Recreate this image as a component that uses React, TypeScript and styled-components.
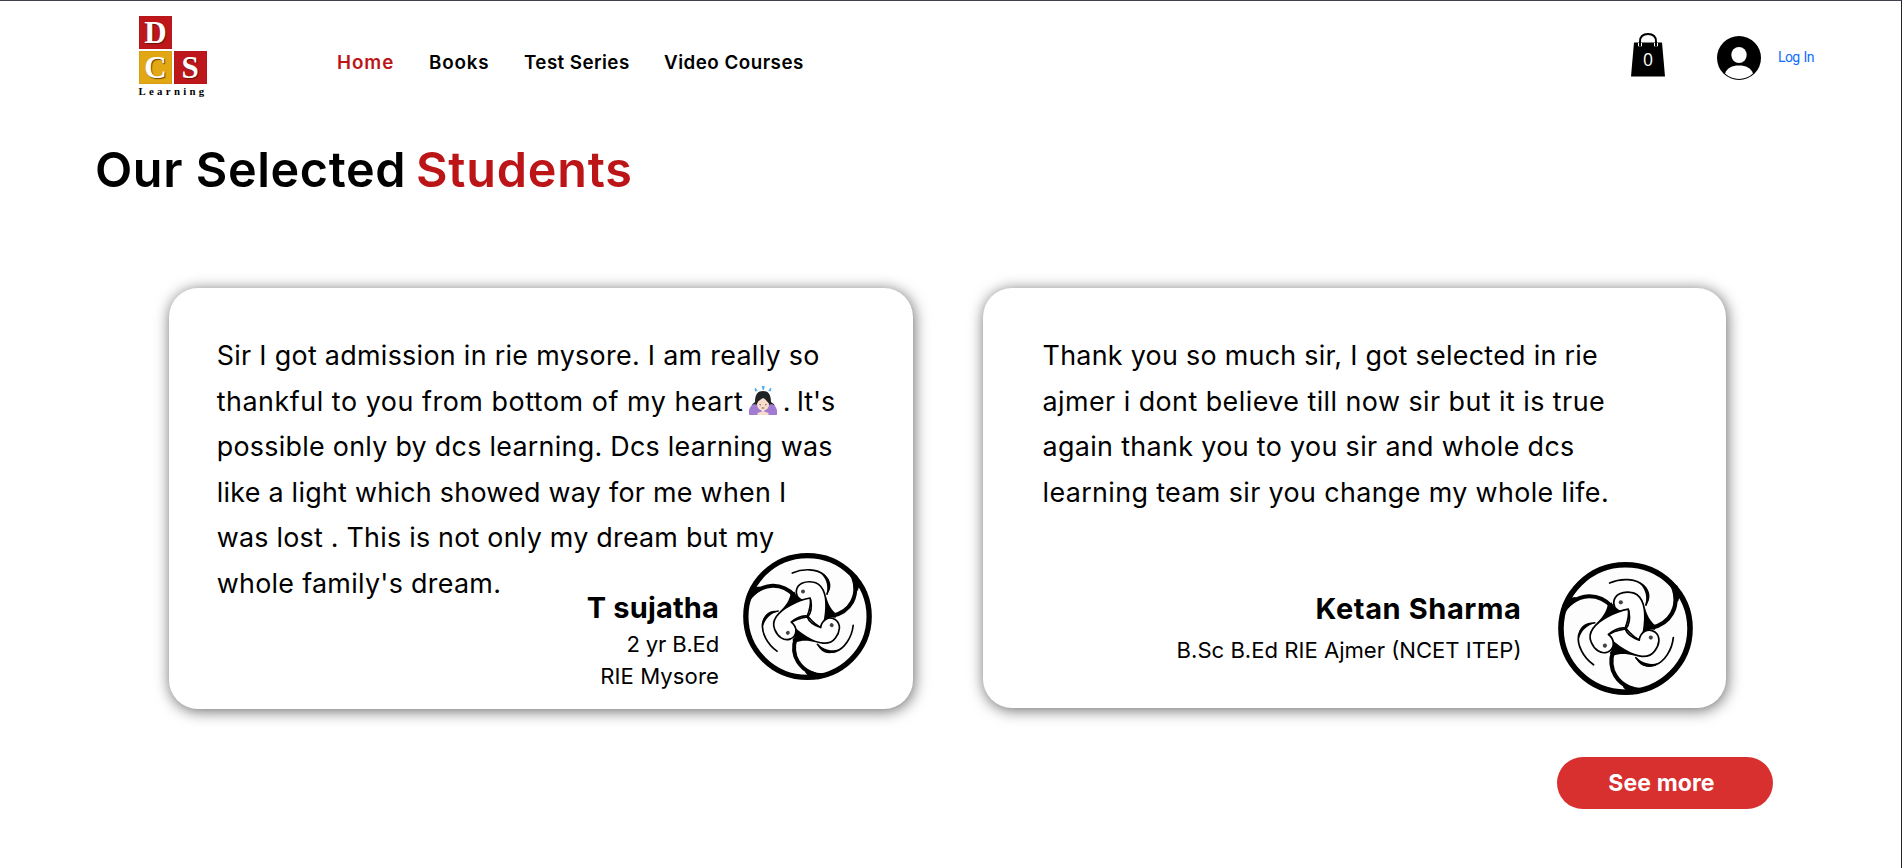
import React from "react";
import styled, { createGlobalStyle } from "styled-components";

const RED = "#bb1518";

const GlobalStyle = createGlobalStyle`
  * { box-sizing: border-box; }
  body { margin: 0; background: #fff; color: #000; font-family: Inter, "Open Sans", sans-serif; }
  a { color: inherit; text-decoration: none; }
`;

const Page = styled.div`
  width: 1902px;
  height: 868px;
  overflow: hidden;
  display: flex;
  flex-direction: column;
  border-top: 1px solid #45404e;
  border-right: 1px solid #26242a;
`;

const Header = styled.header`
  height: 110px;
  padding: 0 88px 0 138px;
  display: flex;
  align-items: flex-start;
`;

const Logo = styled.div`
  width: 70px;
  margin: 15px 129px 0 0;
  font-family: "Liberation Serif", serif;
`;

const Tiles = styled.div`
  display: grid;
  grid-template-columns: 33px 33px;
  grid-auto-rows: 33px;
  gap: 2px 1.6px;
  padding-left: 1px;
`;

const Tile = styled.span<{ $tone?: "gold" }>`
  grid-column: ${(p) => (p.$tone ? 1 : "auto")};
  background: ${(p) => (p.$tone ? "#e2a814" : "#bd171b")};
  box-shadow: inset 0 0 1px rgba(60, 0, 0, 0.5);
  color: #fff;
  font-size: 31px;
  font-weight: 700;
  line-height: 33px;
  text-align: center;
  text-shadow: 1px 1px 1px rgba(60, 20, 0, 0.7);
`;

const LogoCaption = styled.div`
  margin: 1px 0 0 0.5px;
  font-size: 10.8px;
  line-height: 12px;
  font-weight: 700;
  letter-spacing: 3.3px;
  white-space: nowrap;
`;

const Nav = styled.nav`
  display: flex;
  margin-top: 50px;
  line-height: 24px;
`;

const NavLink = styled.a<{ $active?: boolean; $width: number; $track: number }>`
  width: ${(p) => p.$width}px;
  color: ${(p) => (p.$active ? RED : "#000")};
  font-size: 18.8px;
  font-weight: 600;
  letter-spacing: ${(p) => p.$track}px;
  white-space: nowrap;
`;

const Account = styled.div`
  margin-left: auto;
  padding-top: 31px;
  display: flex;
  align-items: flex-start;
`;

const Bag = styled.svg`
  width: 36px;
  height: 46px;
  margin-right: 51px;
`;

const Avatar = styled.svg`
  width: 44px;
  height: 44px;
  margin: 4px 17px 0 0;
`;

const LogIn = styled.a`
  width: 35px;
  margin-top: 15px;
  color: #116dff;
  font-family: Roboto, sans-serif;
  font-size: 14px;
  line-height: 20px;
  letter-spacing: -0.6px;
  word-spacing: 1px;
  white-space: nowrap;
`;

const Heading = styled.h1`
  margin: 29px 0 0 95px;
  font-size: 48.5px;
  line-height: 60px;
  font-weight: 600;
  letter-spacing: 0.6px;
  white-space: nowrap;
`;

const HeadingAccent = styled.span`
  margin-left: -3px;
  color: ${RED};
  letter-spacing: 0.8px;
`;

const Cards = styled.main`
  display: flex;
  align-items: flex-start;
  gap: 70px;
  margin: 88px 0 0 169px;
`;

const Card = styled.article<{ $width: number; $height: number; $inset: number }>`
  width: ${(p) => p.$width}px;
  height: ${(p) => p.$height}px;
  padding: 45px 0 0 ${(p) => p.$inset}px;
  display: grid;
  border-radius: 29px;
  background: #fff;
  box-shadow: 1px 2px 15px rgba(0, 0, 0, 0.6);
`;

const Quote = styled.blockquote`
  grid-area: 1 / 1;
  margin: 0;
  font-size: 26.88px;
  line-height: 45.6px;
`;

const Line = styled.div<{ $track: number }>`
  height: 45.6px;
  letter-spacing: ${(p) => p.$track}px;
  white-space: nowrap;
`;

const LineEnd = styled.span`
  letter-spacing: 0;
  word-spacing: -1.5px;
`;

const Bow = styled.svg`
  width: 28px;
  height: 29px;
  margin: 0 5.5px 0 6px;
  vertical-align: -4px;
`;

const Signature = styled.footer<{ $gap: number; $right: number }>`
  grid-area: 1 / 1;
  place-self: end;
  display: flex;
  align-items: flex-end;
  gap: ${(p) => p.$gap}px;
  padding-right: ${(p) => p.$right}px;
`;

const Person = styled.div<{ $bottom: number }>`
  padding-bottom: ${(p) => p.$bottom}px;
  text-align: right;
`;

const Name = styled.div<{ $track: number; $space: number }>`
  margin-bottom: ${(p) => p.$space}px;
  font-size: 29px;
  font-weight: 700;
  line-height: 36px;
  letter-spacing: ${(p) => p.$track}px;
`;

const Detail = styled.div<{ $track: number }>`
  font-size: 22.1px;
  line-height: 32px;
  letter-spacing: ${(p) => p.$track}px;
`;

const EmblemSvg = styled.svg<{ $w: number; $h: number; $bottom: number }>`
  width: ${(p) => p.$w}px;
  height: ${(p) => p.$h}px;
  margin-bottom: ${(p) => p.$bottom}px;
`;

const Actions = styled.div`
  display: flex;
  justify-content: flex-end;
  padding-right: 128px;
  margin-top: 48px;
`;

const MoreButton = styled.button`
  width: 216px;
  height: 52px;
  padding: 0 7px 0 0;
  border: 0;
  border-radius: 26px;
  background: #d82f2f;
  color: #fff;
  font: 700 23px/53px Inter, sans-serif;
  letter-spacing: 0.1px;
`;

function Arm({ turn }: { turn: number }) {
  return (
    <g transform={`rotate(${turn} 217.5 214)`} fill="none" stroke="#000">
      <path d="M343 76C362 100 368 138 351 170C340 190 324 205 292 212" strokeWidth="12" />
      <path d="M334 68L366 90L384 130C378 116 374 116 369 134L358 140L352 100Z" fill="#000" stroke="none" />
      <path d="M272 150C280 178 288 192 304 206L302 218C288 213 280 220 268 236Z" fill="#000" stroke="none" />
      <path d="M172 82C205 67 246 69 268 88C284 104 286 122 276 146" strokeWidth="5" strokeLinecap="round" />
      <path d="M250 77C268 83 284 97 286 116C287 128 284 138 275 146C279 130 277 110 268 96C263 88 258 82 250 77Z" fill="#000" stroke="none" />
    </g>
  );
}

function Bird({ turn }: { turn: number }) {
  return (
    <g transform={`rotate(${turn} 217.5 214)`}>
      <path
        d="M227 163C206 172 182 160 184 136C187 114 210 106 232 109C262 112 274 145 273 185C272 215 270 228 262 249C245 243 232 230 219 214C231 200 230 180 227 163Z"
        fill="#fff"
        stroke="#000"
        strokeWidth="5"
        strokeLinejoin="round"
      />
      <circle cx="204" cy="138" r="6" fill="#444" />
    </g>
  );
}

function Emblem(props: { w: number; h: number; bottom: number }) {
  return (
    <EmblemSvg $w={props.w} $h={props.h} $bottom={props.bottom} viewBox="24 21 387 386" preserveAspectRatio="none">
      <circle cx="217.5" cy="214" r="185" fill="#fdfdfd" stroke="#000" strokeWidth="16" />
      {[0, 120, 240].map((t) => <Arm key={t} turn={t} />)}
      {[0, 120, 240].map((t) => <Bird key={t} turn={t} />)}
    </EmblemSvg>
  );
}

function BowingPerson() {
  return (
    <Bow viewBox="0 0 28 29" role="img" aria-label="Person bowing">
      <path d="M6.2 2l2 2.600-1.800.5zM13 .4h2.300l-1 3.600zM21.800 2l-.2 3-1.800-.4z" fill="#4aa7ee" stroke="#4aa7ee" strokeWidth=".8" />
      <path d="M6 16C6 8 9 5 14 5s8 3 8 11c2 1.500 4 2.500 3.500 4.500L20 20H8l-5 .5C2.500 18.500 4 17.500 6 16z" fill="#202326" />
      <path d="M2 20c2-2.500 5-2.500 7.500 0l4.500 6 4.500-6c2.500-2.500 5.500-2.500 7.500 0 2 3 2.500 5 1.800 9H.2C-.5 25 0 23 2 20z" fill="#a17bd2" />
      <path d="M8 18c0-3 2-5 6-6 4 1 6 3 6 6 0 4-2.500 6.500-6 6.500S8 22 8 18z" fill="#f8dccb" />
      <path d="M8 17.500c1-3 4-4 6.500-6l5.500 6V11L14 7 8 11z" fill="#202326" />
      <path d="M8.500 29v-2L14 25l5.500 2v2z" fill="#f8dccb" />
      <path d="M10.500 18.500l1.500.5M17.500 18.500L16 19M12.800 22h2.400" stroke="#70493f" strokeWidth=".9" fill="none" />
    </Bow>
  );
}

export default function App() {
  return (
    <>
      <GlobalStyle />
      <Page>
        <Header>
          <Logo>
            <Tiles>
              <Tile>D</Tile>
              <Tile $tone="gold">C</Tile>
              <Tile>S</Tile>
            </Tiles>
            <LogoCaption>Learning</LogoCaption>
          </Logo>
          <Nav>
            <NavLink href="#" $active $width={92} $track={0.95}>Home</NavLink>
            <NavLink href="#" $width={95} $track={0.85}>Books</NavLink>
            <NavLink href="#" $width={140} $track={0.42}>Test Series</NavLink>
            <NavLink href="#" $width={142} $track={0.48}>Video Courses</NavLink>
          </Nav>
          <Account>
            <Bag viewBox="0 0 36 46">
              <path d="M4 10.500h28l3 34H1z" />
              <path d="M10 14.500V9.500C10 4.500 13 2 18 2s8 2.500 8 7.500v5" fill="none" stroke="#fff" strokeWidth="4" clipPath="inset(11px 0 0 0)" />
              <path d="M10 14V9.500C10 4.500 13 2 18 2s8 2.500 8 7.500V14" fill="none" stroke="#000" strokeWidth="2" />
              <text x="18" y="33.500" textAnchor="middle" fill="#fff" fontFamily="Open Sans, sans-serif" fontSize="17.500">0</text>
            </Bag>
            <Avatar viewBox="0 0 44 44">
              <circle cx="22" cy="22" r="22" />
              <ellipse cx="22" cy="19" rx="7.700" ry="8" fill="#fff" />
              <path d="M8 37.500C10 32 15 29.500 22 29.500S34 32 36 37.500A20.500 20.500 0 0 1 8 37.500z" fill="#fff" />
            </Avatar>
            <LogIn href="#">Log In</LogIn>
          </Account>
        </Header>
        <Heading>
          Our Selected <HeadingAccent>Students</HeadingAccent>
        </Heading>
        <Cards>
          <Card $width={744} $height={421} $inset={47.7}>
            <Quote>
              <Line $track={0.3}>Sir I got admission in rie mysore. I am really so</Line>
              <Line $track={0.54}>
                thankful to you from bottom of my heart<BowingPerson /><LineEnd>. It's</LineEnd>
              </Line>
              <Line $track={0.27}>possible only by dcs learning. Dcs learning was</Line>
              <Line $track={0.27}>like a light which showed way for me when I</Line>
              <Line $track={0.23}>was lost . This is not only my dream but my</Line>
              <Line $track={0.29}>whole family's dream.</Line>
            </Quote>
            <Signature $gap={24} $right={41}>
              <Person $bottom={17.5}>
                <Name $track={0.15} $space={1.2}>T sujatha</Name>
                <Detail $track={-0.2}>2 yr B.Ed</Detail>
                <Detail $track={0.1}>RIE Mysore</Detail>
              </Person>
              <Emblem w={129} h={127} bottom={29} />
            </Signature>
          </Card>
          <Card $width={743} $height={420} $inset={59.5}>
            <Quote>
              <Line $track={0.28}>Thank you so much sir, I got selected in rie</Line>
              <Line $track={0.45}>ajmer i dont believe till now sir but it is true</Line>
              <Line $track={0.35}>again thank you to you sir and whole dcs</Line>
              <Line $track={0.37}>learning team sir you change my whole life.</Line>
            </Quote>
            <Signature $gap={36.5} $right={33}>
              <Person $bottom={42}>
                <Name $track={0.6} $space={7.4}>Ketan Sharma</Name>
                <Detail $track={0}>B.Sc B.Ed RIE Ajmer (NCET ITEP)</Detail>
              </Person>
              <Emblem w={135} h={133} bottom={13} />
            </Signature>
          </Card>
        </Cards>
        <Actions>
          <MoreButton>See more</MoreButton>
        </Actions>
      </Page>
    </>
  );
}
